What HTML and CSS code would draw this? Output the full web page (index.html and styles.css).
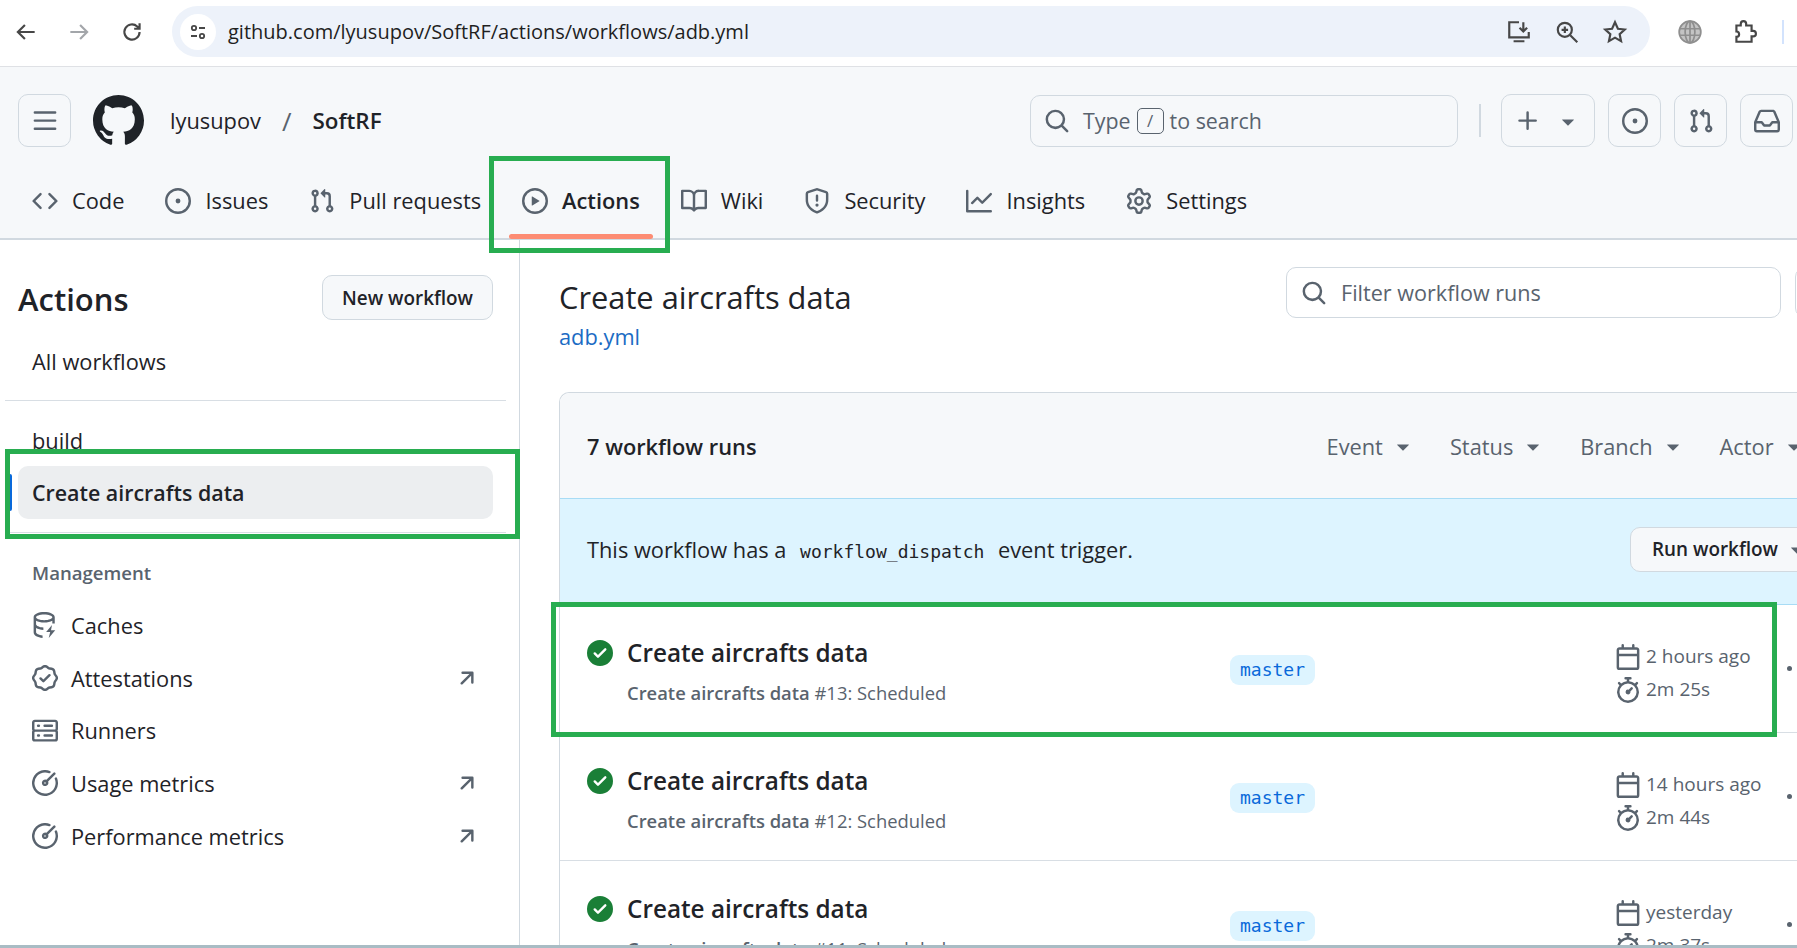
FILE: index.html
```html
<!DOCTYPE html>
<html lang="en">
<head>
  <meta charset="UTF-8">
  <meta name="viewport" content="width=device-width, initial-scale=1.0">
  <title>Create aircrafts data · lyusupov/SoftRF</title>
  <link rel="stylesheet" href="styles.css">
</head>
<body>

  <svg class="sprite" aria-hidden="true">
    <symbol id="i-bars" viewBox="0 0 16 16"><path d="M1 2.75A.75.75 0 0 1 1.75 2h12.5a.75.75 0 0 1 0 1.5H1.75A.75.75 0 0 1 1 2.75Zm0 5A.75.75 0 0 1 1.75 7h12.5a.75.75 0 0 1 0 1.5H1.75A.75.75 0 0 1 1 7.75ZM1.75 12h12.5a.75.75 0 0 1 0 1.5H1.75a.75.75 0 0 1 0-1.5Z"/></symbol>
    <symbol id="i-mark" viewBox="0 0 16 16"><path d="M8 0c4.42 0 8 3.58 8 8a8.013 8.013 0 0 1-5.45 7.59c-.4.08-.55-.17-.55-.38 0-.27.01-1.13.01-2.2 0-.75-.25-1.23-.54-1.48 1.78-.2 3.65-.88 3.65-3.95 0-.88-.31-1.59-.82-2.15.08-.2.36-1.02-.08-2.12 0 0-.67-.22-2.2.82-.64-.18-1.32-.27-2-.27-.68 0-1.36.09-2 .27-1.53-1.03-2.2-.82-2.2-.82-.44 1.1-.16 1.92-.08 2.12-.51.56-.82 1.28-.82 2.15 0 3.06 1.86 3.75 3.64 3.95-.23.2-.44.55-.51 1.07-.46.21-1.61.55-2.33-.66-.15-.24-.6-.83-1.23-.82-.67.01-.27.38.01.53.34.19.73.9.82 1.13.16.45.68 1.31 2.69.94 0 .67.01 1.3.01 1.49 0 .21-.15.45-.55.38A7.995 7.995 0 0 1 0 8c0-4.42 3.58-8 8-8Z"/></symbol>
    <symbol id="i-code" viewBox="0 0 16 16"><path d="m11.28 3.22 4.25 4.25a.75.75 0 0 1 0 1.06l-4.25 4.25a.749.749 0 0 1-1.275-.326.749.749 0 0 1 .215-.734L13.94 8l-3.72-3.72a.749.749 0 0 1 .326-1.275.749.749 0 0 1 .734.215Zm-6.56 0a.751.751 0 0 1 1.042.018.751.751 0 0 1 .018 1.042L2.06 8l3.72 3.72a.749.749 0 0 1-.326 1.275.749.749 0 0 1-.734-.215L.47 8.53a.75.75 0 0 1 0-1.06Z"/></symbol>
    <symbol id="i-issue" viewBox="0 0 16 16"><path d="M8 9.5a1.5 1.5 0 1 0 0-3 1.5 1.5 0 0 0 0 3Z"/><path d="M8 0a8 8 0 1 1 0 16A8 8 0 0 1 8 0ZM1.5 8a6.5 6.5 0 1 0 13 0 6.5 6.5 0 0 0-13 0Z"/></symbol>
    <symbol id="i-pull" viewBox="0 0 16 16"><path d="M1.5 3.25a2.25 2.25 0 1 1 3 2.122v5.256a2.251 2.251 0 1 1-1.5 0V5.372A2.25 2.25 0 0 1 1.5 3.25Zm5.677-.177L9.573.677A.25.25 0 0 1 10 .854V2.5h1A2.5 2.5 0 0 1 13.5 5v5.628a2.251 2.251 0 1 1-1.5 0V5a1 1 0 0 0-1-1h-1v1.646a.25.25 0 0 1-.427.177L7.177 3.427a.25.25 0 0 1 0-.354ZM3.75 2.5a.75.75 0 1 0 0 1.5.75.75 0 0 0 0-1.5Zm0 9.5a.75.75 0 1 0 0 1.5.75.75 0 0 0 0-1.5Zm8.25.75a.75.75 0 1 0 1.5 0 .75.75 0 0 0-1.5 0Z"/></symbol>
    <symbol id="i-play" viewBox="0 0 16 16"><path d="M8 0a8 8 0 1 1 0 16A8 8 0 0 1 8 0ZM1.5 8a6.5 6.5 0 1 0 13 0 6.5 6.5 0 0 0-13 0Zm4.879-2.773 4.264 2.559a.25.25 0 0 1 0 .428l-4.264 2.559A.25.25 0 0 1 6 10.559V5.442a.25.25 0 0 1 .379-.215Z"/></symbol>
    <symbol id="i-book" viewBox="0 0 16 16"><path d="M0 1.75A.75.75 0 0 1 .75 1h4.253c1.227 0 2.317.59 3 1.501A3.743 3.743 0 0 1 11.006 1h4.245a.75.75 0 0 1 .75.75v10.5a.75.75 0 0 1-.75.75h-4.507a2.25 2.25 0 0 0-1.591.659l-.622.621a.75.75 0 0 1-1.06 0l-.622-.621A2.25 2.25 0 0 0 5.258 13H.75a.75.75 0 0 1-.75-.75Zm7.251 10.324.004-5.073-.002-2.253A2.25 2.25 0 0 0 5.003 2.5H1.5v9h3.757a3.75 3.75 0 0 1 1.994.574ZM8.755 4.75l-.004 7.322a3.752 3.752 0 0 1 1.992-.572H14.5v-9h-3.495a2.25 2.25 0 0 0-2.25 2.25Z"/></symbol>
    <symbol id="i-shield" viewBox="0 0 16 16"><path d="M7.467.133a1.748 1.748 0 0 1 1.066 0l5.25 1.68A1.75 1.75 0 0 1 15 3.48V7c0 1.566-.32 3.182-1.303 4.682-.983 1.498-2.585 2.813-5.032 3.855a1.697 1.697 0 0 1-1.33 0c-2.447-1.042-4.049-2.357-5.032-3.855C1.32 10.182 1 8.566 1 7V3.48a1.75 1.75 0 0 1 1.217-1.667Zm.61 1.429a.25.25 0 0 0-.153 0l-5.25 1.68a.25.25 0 0 0-.174.238V7c0 1.358.275 2.666 1.057 3.86.784 1.194 2.121 2.34 4.366 3.297a.196.196 0 0 0 .154 0c2.245-.956 3.582-2.104 4.366-3.298C13.225 9.666 13.5 8.36 13.5 7V3.48a.251.251 0 0 0-.174-.237l-5.25-1.68ZM8.75 4.75v3a.75.75 0 0 1-1.5 0v-3a.75.75 0 0 1 1.5 0ZM9 10.5a1 1 0 1 1-2 0 1 1 0 0 1 2 0Z"/></symbol>
    <symbol id="i-graph" viewBox="0 0 16 16"><path d="M1.5 1.75V13.5h13.75a.75.75 0 0 1 0 1.5H.75a.75.75 0 0 1-.75-.75V1.75a.75.75 0 0 1 1.5 0Zm14.28 2.53-5.25 5.25a.75.75 0 0 1-1.06 0L7 7.06 4.28 9.78a.751.751 0 0 1-1.042-.018.751.751 0 0 1-.018-1.042l3.25-3.25a.75.75 0 0 1 1.06 0L10 7.94l4.72-4.72a.751.751 0 0 1 1.042.018.751.751 0 0 1 .018 1.042Z"/></symbol>
    <symbol id="i-gear" viewBox="0 0 16 16"><path d="M8 0a8.2 8.2 0 0 1 .701.031C9.444.095 9.99.645 10.16 1.29l.288 1.107c.018.066.079.158.212.224.231.114.454.243.668.386.123.082.233.09.299.071l1.103-.303c.644-.176 1.392.021 1.82.63.27.385.506.792.704 1.218.315.675.111 1.422-.364 1.891l-.814.806c-.049.048-.098.147-.088.294.016.257.016.515 0 .772-.01.147.038.246.088.294l.814.806c.475.469.679 1.216.364 1.891a7.977 7.977 0 0 1-.704 1.217c-.428.61-1.176.807-1.82.63l-1.102-.302c-.067-.019-.177-.011-.3.071a5.909 5.909 0 0 1-.668.386c-.133.066-.194.158-.211.224l-.29 1.106c-.168.646-.715 1.196-1.458 1.26a8.006 8.006 0 0 1-1.402 0c-.743-.064-1.289-.614-1.458-1.26l-.289-1.106c-.018-.066-.079-.158-.212-.224a5.738 5.738 0 0 1-.668-.386c-.123-.082-.233-.09-.299-.071l-1.103.303c-.644.176-1.392-.021-1.82-.63a8.12 8.12 0 0 1-.704-1.218c-.315-.675-.111-1.422.363-1.891l.815-.806c.05-.048.098-.147.088-.294a6.214 6.214 0 0 1 0-.772c.01-.147-.038-.246-.088-.294l-.815-.806C.635 6.045.431 5.298.746 4.623a7.92 7.92 0 0 1 .704-1.217c.428-.61 1.176-.807 1.82-.63l1.102.302c.067.019.177.011.3-.071.214-.143.437-.272.668-.386.133-.066.194-.158.211-.224l.29-1.106C6.009.645 6.556.095 7.299.03 7.53.01 7.764 0 8 0Zm-.571 1.525c-.036.003-.108.036-.137.146l-.289 1.105c-.147.561-.549.967-.998 1.189-.173.086-.34.183-.5.29-.417.278-.97.423-1.529.27l-1.103-.303c-.109-.03-.175.016-.195.045-.22.312-.412.644-.573.99-.014.031-.021.11.059.19l.815.806c.411.406.562.957.53 1.456a4.709 4.709 0 0 0 0 .582c.032.499-.119 1.05-.53 1.456l-.815.806c-.081.08-.073.159-.059.19.162.346.353.677.573.989.02.03.085.076.195.046l1.102-.303c.56-.153 1.113-.008 1.53.27.161.107.328.204.501.29.447.222.85.629.997 1.189l.289 1.105c.029.109.101.143.137.146a6.6 6.6 0 0 0 1.142 0c.036-.003.108-.036.137-.146l.289-1.105c.147-.561.549-.967.998-1.189.173-.086.34-.183.5-.29.417-.278.97-.423 1.529-.27l1.103.303c.109.029.175-.016.195-.045.22-.313.411-.644.573-.99.014-.031.021-.11-.059-.19l-.815-.806c-.411-.406-.562-.957-.53-1.456a4.709 4.709 0 0 0 0-.582c-.032-.499.119-1.05.53-1.456l.815-.806c.081-.08.073-.159.059-.19a6.464 6.464 0 0 0-.573-.989c-.02-.03-.085-.076-.195-.046l-1.102.303c-.56.153-1.113.008-1.53-.27a4.44 4.44 0 0 0-.501-.29c-.447-.222-.85-.629-.997-1.189l-.289-1.105c-.029-.11-.101-.143-.137-.146a6.6 6.6 0 0 0-1.142 0ZM11 8a3 3 0 1 1-6 0 3 3 0 0 1 6 0ZM9.5 8a1.5 1.5 0 1 0-3.001.001A1.5 1.5 0 0 0 9.5 8Z"/></symbol>
    <symbol id="i-search" viewBox="0 0 16 16"><path d="M10.68 11.74a6 6 0 0 1-7.922-8.982 6 6 0 0 1 8.982 7.922l3.04 3.04a.749.749 0 0 1-.326 1.275.749.749 0 0 1-.734-.215ZM11.5 7a4.499 4.499 0 1 0-8.997 0A4.499 4.499 0 0 0 11.5 7Z"/></symbol>
    <symbol id="i-plus" viewBox="0 0 16 16"><path d="M7.75 2a.75.75 0 0 1 .75.75V7h4.25a.75.75 0 0 1 0 1.5H8.5v4.25a.75.75 0 0 1-1.5 0V8.5H2.75a.75.75 0 0 1 0-1.5H7V2.75A.75.75 0 0 1 7.75 2Z"/></symbol>
    <symbol id="i-caret" viewBox="0 0 16 16"><path d="m4.427 7.427 3.396 3.396a.25.25 0 0 0 .354 0l3.396-3.396A.25.25 0 0 0 11.396 7H4.604a.25.25 0 0 0-.177.427Z"/></symbol>
    <symbol id="i-inbox" viewBox="0 0 16 16"><path d="M2.8 2.06A1.75 1.75 0 0 1 4.41 1h7.18c.7 0 1.333.417 1.61 1.06l2.74 6.395c.04.093.06.194.06.295v4.5A1.75 1.75 0 0 1 14.25 15H1.75A1.75 1.75 0 0 1 0 13.25v-4.5c0-.101.02-.202.06-.295Zm1.61.44a.25.25 0 0 0-.23.152L1.887 8H4.75a.75.75 0 0 1 .6.3L6.625 10h2.75l1.275-1.7a.75.75 0 0 1 .6-.3h2.863L11.82 2.652a.25.25 0 0 0-.23-.152Zm10.09 7h-2.875l-1.275 1.7a.75.75 0 0 1-.6.3h-3.5a.75.75 0 0 1-.6-.3L4.375 9.5H1.5v3.75c0 .138.112.25.25.25h12.5a.25.25 0 0 0 .25-.25Z"/></symbol>
    <symbol id="i-check" viewBox="0 0 16 16"><path d="M8 16A8 8 0 1 1 8 0a8 8 0 0 1 0 16Zm3.78-9.72a.751.751 0 0 0-.018-1.042.751.751 0 0 0-1.042-.018L6.75 9.19 5.28 7.72a.751.751 0 0 0-1.042.018.751.751 0 0 0-.018 1.042l2 2a.75.75 0 0 0 1.06 0Z"/></symbol>
    <symbol id="i-calendar" viewBox="0 0 16 16"><path d="M4.75 0a.75.75 0 0 1 .75.75V2h5V.75a.75.75 0 0 1 1.5 0V2h1.25c.966 0 1.75.784 1.75 1.75v10.5A1.75 1.75 0 0 1 13.25 16H2.75A1.75 1.75 0 0 1 1 14.25V3.75C1 2.784 1.784 2 2.75 2H4V.75A.75.75 0 0 1 4.75 0ZM2.5 7.5v6.75c0 .138.112.25.25.25h10.5a.25.25 0 0 0 .25-.25V7.5Zm10.75-4H2.75a.25.25 0 0 0-.25.25V6h11V3.75a.25.25 0 0 0-.25-.25Z"/></symbol>
    <symbol id="i-watch" viewBox="0 0 16 16"><path d="M5.75.75A.75.75 0 0 1 6.5 0h3a.75.75 0 0 1 0 1.5h-.75v1l-.001.041a6.724 6.724 0 0 1 3.464 1.435l.007-.006.75-.75a.751.751 0 0 1 1.042.018.751.751 0 0 1 .018 1.042l-.75.75-.006.007a6.75 6.75 0 1 1-10.548 0L2.72 5.03l-.75-.75a.751.751 0 0 1 .018-1.042.751.751 0 0 1 1.042-.018l.75.75.007.006A6.72 6.72 0 0 1 7.25 2.541V1.5H6.5a.75.75 0 0 1-.75-.75ZM8 14.5a5.25 5.25 0 1 0-.001-10.501A5.25 5.25 0 0 0 8 14.5Zm.389-6.7 1.33-1.33a.75.75 0 1 1 1.061 1.06L9.45 8.861A1.503 1.503 0 0 1 8 10.75a1.499 1.499 0 1 1 .389-2.95Z"/></symbol>
    <symbol id="i-arrow" viewBox="0 0 16 16"><path d="M4.53 4.75A.75.75 0 0 1 5.28 4h6.01a.75.75 0 0 1 .75.75v6.01a.75.75 0 0 1-1.5 0v-4.2l-5.26 5.261a.749.749 0 0 1-1.275-.326.749.749 0 0 1 .215-.734L9.48 5.5h-4.2a.75.75 0 0 1-.75-.75Z"/></symbol>
    <symbol id="i-verified" viewBox="0 0 16 16"><path d="m9.585.52.929.68c.153.112.331.186.518.215l1.138.175a2.678 2.678 0 0 1 2.24 2.24l.174 1.139c.029.187.103.365.215.518l.68.928a2.677 2.677 0 0 1 0 3.17l-.68.928a1.174 1.174 0 0 0-.215.518l-.175 1.138a2.678 2.678 0 0 1-2.241 2.241l-1.138.175a1.17 1.17 0 0 0-.518.215l-.928.68a2.677 2.677 0 0 1-3.17 0l-.928-.68a1.174 1.174 0 0 0-.518-.215L3.83 14.41a2.678 2.678 0 0 1-2.24-2.24l-.175-1.138a1.17 1.17 0 0 0-.215-.518l-.68-.928a2.677 2.677 0 0 1 0-3.17l.68-.928c.112-.153.186-.331.215-.518l.175-1.14a2.678 2.678 0 0 1 2.24-2.24l1.139-.175c.187-.029.365-.103.518-.215l.928-.68a2.677 2.677 0 0 1 3.17 0ZM7.303 1.728l-.927.68a2.67 2.67 0 0 1-1.18.489l-1.137.174a1.179 1.179 0 0 0-.987.987l-.174 1.136a2.677 2.677 0 0 1-.489 1.18l-.68.928a1.18 1.18 0 0 0 0 1.394l.68.927c.256.348.424.753.489 1.18l.174 1.137c.078.509.478.909.987.987l1.136.174a2.67 2.67 0 0 1 1.18.489l.928.68c.414.305.979.305 1.394 0l.927-.68a2.67 2.67 0 0 1 1.18-.489l1.137-.174a1.18 1.18 0 0 0 .987-.987l.174-1.136a2.67 2.67 0 0 1 .489-1.18l.68-.928a1.176 1.176 0 0 0 0-1.394l-.68-.927a2.686 2.686 0 0 1-.489-1.18l-.174-1.137a1.179 1.179 0 0 0-.987-.987l-1.136-.174a2.677 2.677 0 0 1-1.18-.489l-.928-.68a1.176 1.176 0 0 0-1.394 0ZM11.28 6.78l-3.75 3.75a.75.75 0 0 1-1.06 0L4.72 8.78a.751.751 0 0 1 .018-1.042.751.751 0 0 1 1.042-.018l1.22 1.22 3.22-3.22a.751.751 0 0 1 1.042.018.751.751 0 0 1 .018 1.042Z"/></symbol>
    <symbol id="i-server" viewBox="0 0 16 16"><path d="M1.75 1h12.5c.966 0 1.75.784 1.75 1.75v4c0 .372-.116.717-.314 1 .198.283.314.628.314 1v4a1.75 1.75 0 0 1-1.75 1.75H1.75A1.75 1.75 0 0 1 0 12.75v-4c0-.372.116-.717.314-1A1.739 1.739 0 0 1 0 6.75v-4C0 1.784.784 1 1.75 1ZM1.5 2.75v4c0 .138.112.25.25.25h12.5a.25.25 0 0 0 .25-.25v-4a.25.25 0 0 0-.25-.25H1.75a.25.25 0 0 0-.25.25Zm.25 5.75a.25.25 0 0 0-.25.25v4c0 .138.112.25.25.25h12.5a.25.25 0 0 0 .25-.25v-4a.25.25 0 0 0-.25-.25ZM7 4.75A.75.75 0 0 1 7.75 4h4.5a.75.75 0 0 1 0 1.5h-4.5A.75.75 0 0 1 7 4.75ZM7.75 10h4.5a.75.75 0 0 1 0 1.5h-4.5a.75.75 0 0 1 0-1.5ZM3 4.75A.75.75 0 0 1 3.75 4h.5a.75.75 0 0 1 0 1.5h-.5A.75.75 0 0 1 3 4.75ZM3.75 10h.5a.75.75 0 0 1 0 1.5h-.5a.75.75 0 0 1 0-1.5Z"/></symbol>
    <symbol id="i-meter" viewBox="0 0 16 16"><path d="M8 1.5a6.5 6.5 0 1 0 6.016 4.035.75.75 0 0 1 1.388-.57A8 8 0 1 1 11.035.596a.75.75 0 1 1-.57 1.388A6.47 6.47 0 0 0 8 1.5Zm6.28.22a.75.75 0 0 1 0 1.06L9.93 7.13A2 2 0 1 1 8.87 6.07l4.35-4.35a.75.75 0 0 1 1.06 0ZM8 7.5a.5.5 0 1 0 0 1 .5.5 0 0 0 0-1Z"/></symbol>
    <symbol id="i-cache" viewBox="0 0 16 16"><path d="M7.5 0C11 0 14 1.2 14 3.2V7h-1.5V5.4C11.300 6.100 9.500 6.500 7.500 6.500S3.700 6.100 2.500 5.400v2.100c0 .9 2 1.900 4.500 2V11c-1.800-.1-3.400-.5-4.500-1.200v2.700c0 .8 1.700 1.700 4 1.900V16C3.500 15.800 1 14.500 1 12.500V3.200C1 1.200 4 0 7.500 0Zm0 1.500c-2.900 0-5 .9-5 1.700s2.100 1.800 5 1.800 5-1 5-1.800-2.100-1.700-5-1.700Z"/><path d="M12.300 8 8.700 12.300h2.500L10.300 16l4-4.800h-2.600Z"/></symbol>
  </svg>

  <div class="chrome">
    <svg class="chrome-icon" viewBox="0 0 24 24"><path d="M20 12H5M11 5.500 4.500 12l6.500 6.500"/></svg>
    <svg class="chrome-icon is-off" viewBox="0 0 24 24"><path d="M4 12h15M13 5.500l6.500 6.500-6.500 6.500"/></svg>
    <svg class="chrome-icon" viewBox="0 0 24 24"><path d="M19 12a7 7 0 1 1-2.200-5.100L19 9M19 4v5h-5"/></svg>
    <div class="omnibox">
      <span class="tune">
        <svg viewBox="0 0 20 20"><circle cx="6" cy="6" r="2.200"/><path d="M11 6h6M3 14h6"/><circle cx="14" cy="14" r="2.200"/></svg>
      </span>
      <span class="url">github.com/lyusupov/SoftRF/actions/workflows/adb.yml</span>
      <span class="omni-actions">
        <svg class="chrome-icon" viewBox="0 0 24 24"><path d="M12 3H3v14h18V12M16 3v8M12.500 8l3.500 3.500L19.500 8M7 20.500h10"/></svg>
        <svg class="chrome-icon" viewBox="0 0 24 24"><circle cx="10" cy="10" r="6.500"/><path d="m15 15 6.500 6.500M7 10h6M10 7v6"/></svg>
        <svg class="chrome-icon" viewBox="0 0 24 24"><path d="m12 3 2.700 6 6.300.700-4.700 4.300 1.300 6.500-5.600-3.300-5.600 3.300 1.300-6.500L3 9.700 9.300 9Z"/></svg>
      </span>
    </div>
    <svg class="chrome-icon globe" viewBox="0 0 24 24"><circle cx="12" cy="12" r="10"/><ellipse cx="12" cy="12" rx="4.500" ry="10"/><path d="M2 9h20M2 15h20M12 2v20"/></svg>
    <svg class="chrome-icon" viewBox="0 0 24 24"><path d="M5 6h4V4.500a2.500 2.500 0 0 1 5 0V6h5v5h1.500a2.500 2.500 0 0 1 0 5H19v5H5v-4.500a2.500 2.500 0 0 0 0-5Z"/></svg>
    <span class="chrome-sep"></span>
  </div>

  <header class="repo-header">
    <div class="top-row">
      <button class="icon-btn"><svg class="oct"><use href="#i-bars"/></svg></button>
      <svg class="logo"><use href="#i-mark"/></svg>
      <span class="crumb">lyusupov</span>
      <span class="crumb-sep">/</span>
      <strong class="crumb-repo">SoftRF</strong>
      <div class="top-search">
        <svg class="oct"><use href="#i-search"/></svg>
        <span>Type</span>
        <kbd class="slash">/</kbd>
        <span>to search</span>
      </div>
      <span class="top-divider"></span>
      <button class="icon-btn plus-btn">
        <svg class="oct"><use href="#i-plus"/></svg>
        <svg class="caret"><use href="#i-caret"/></svg>
      </button>
      <button class="icon-btn"><svg class="oct"><use href="#i-issue"/></svg></button>
      <button class="icon-btn"><svg class="oct"><use href="#i-pull"/></svg></button>
      <button class="icon-btn"><svg class="oct"><use href="#i-inbox"/></svg></button>
    </div>
    <nav class="tabs">
      <a class="tab"><svg class="oct"><use href="#i-code"/></svg>Code</a>
      <a class="tab"><svg class="oct"><use href="#i-issue"/></svg>Issues</a>
      <a class="tab"><svg class="oct"><use href="#i-pull"/></svg>Pull requests</a>
      <a class="tab tab-active"><svg class="oct"><use href="#i-play"/></svg>Actions</a>
      <a class="tab"><svg class="oct"><use href="#i-book"/></svg>Wiki</a>
      <a class="tab"><svg class="oct"><use href="#i-shield"/></svg>Security</a>
      <a class="tab"><svg class="oct"><use href="#i-graph"/></svg>Insights</a>
      <a class="tab"><svg class="oct"><use href="#i-gear"/></svg>Settings</a>
    </nav>
  </header>

  <div class="layout">
    <aside class="sidebar">
      <div class="side-head">
        <h1>Actions</h1>
        <button class="btn">New workflow</button>
      </div>
      <a class="side-item">All workflows</a>
      <hr class="side-rule rule-top">
      <a class="side-item">build</a>
      <a class="side-item side-current">Create aircrafts data</a>
      <hr class="side-rule rule-bottom">
      <div class="side-title">Management</div>
      <a class="side-item"><svg class="oct"><use href="#i-cache"/></svg>Caches</a>
      <a class="side-item"><svg class="oct"><use href="#i-verified"/></svg>Attestations<svg class="oct side-arrow"><use href="#i-arrow"/></svg></a>
      <a class="side-item"><svg class="oct"><use href="#i-server"/></svg>Runners</a>
      <a class="side-item"><svg class="oct"><use href="#i-meter"/></svg>Usage metrics<svg class="oct side-arrow"><use href="#i-arrow"/></svg></a>
      <a class="side-item"><svg class="oct"><use href="#i-meter"/></svg>Performance metrics<svg class="oct side-arrow"><use href="#i-arrow"/></svg></a>
    </aside>

    <main class="content">
      <div class="content-head">
        <div class="content-title">
          <h2>Create aircrafts data</h2>
          <a class="file-link">adb.yml</a>
        </div>
        <div class="filter">
          <svg class="oct"><use href="#i-search"/></svg>
          Filter workflow runs
        </div>
        <div class="filter-next"></div>
      </div>

      <section class="runs">
        <div class="runs-head">
          <strong>7 workflow runs</strong>
          <div class="runs-filters">
            <span>Event<svg class="caret"><use href="#i-caret"/></svg></span>
            <span>Status<svg class="caret"><use href="#i-caret"/></svg></span>
            <span>Branch<svg class="caret"><use href="#i-caret"/></svg></span>
            <span>Actor<svg class="caret"><use href="#i-caret"/></svg></span>
          </div>
        </div>
        <div class="dispatch">
          <span>This workflow has a <code>workflow_dispatch</code> event trigger.</span>
          <button class="btn run-btn">Run workflow<svg class="caret"><use href="#i-caret"/></svg></button>
        </div>

        <article class="run">
          <svg class="run-check"><use href="#i-check"/></svg>
          <div class="run-main">
            <div class="run-title">Create aircrafts data</div>
            <div class="run-sub"><b>Create aircrafts data</b> #13: Scheduled</div>
          </div>
          <span class="branch">master</span>
          <div class="run-meta">
            <div><svg class="oct"><use href="#i-calendar"/></svg>2 hours ago</div>
            <div><svg class="oct"><use href="#i-watch"/></svg>2m 25s</div>
          </div>
          <span class="run-dot"></span>
        </article>

        <article class="run">
          <svg class="run-check"><use href="#i-check"/></svg>
          <div class="run-main">
            <div class="run-title">Create aircrafts data</div>
            <div class="run-sub"><b>Create aircrafts data</b> #12: Scheduled</div>
          </div>
          <span class="branch">master</span>
          <div class="run-meta">
            <div><svg class="oct"><use href="#i-calendar"/></svg>14 hours ago</div>
            <div><svg class="oct"><use href="#i-watch"/></svg>2m 44s</div>
          </div>
          <span class="run-dot"></span>
        </article>

        <article class="run">
          <svg class="run-check"><use href="#i-check"/></svg>
          <div class="run-main">
            <div class="run-title">Create aircrafts data</div>
            <div class="run-sub"><b>Create aircrafts data</b> #11: Scheduled</div>
          </div>
          <span class="branch">master</span>
          <div class="run-meta">
            <div><svg class="oct"><use href="#i-calendar"/></svg>yesterday</div>
            <div><svg class="oct"><use href="#i-watch"/></svg>2m 37s</div>
          </div>
          <span class="run-dot"></span>
        </article>
      </section>
    </main>
  </div>

  <div class="window-edge"></div>

  <!-- green boxes drawn on top of the screenshot -->
  <div class="mark mark-tab"></div>
  <div class="mark mark-side"></div>
  <div class="mark mark-run"></div>

</body>
</html>
```

FILE: styles.css
```css
* {
  box-sizing: border-box;
}
html, body {
  margin: 0;
  height: 948px;
  overflow: hidden;
}
body {
  position: relative;
  display: flex;
  flex-direction: column;
  font-family: "Open Sans", "Noto Sans", sans-serif;
  font-size: 21.8px;
  color: #1f2328;
  background-color: white;
}
h1, h2 {
  margin: 0;
}
button {
  font-family: inherit;
  color: inherit;
}
.sprite {
  display: none;
}
.oct {
  width: 26px;
  height: 26px;
  flex: none;
  fill: #59636e;
}
.caret {
  width: 26px;
  height: 26px;
  flex: none;
  fill: #59636e;
}

/* browser bar */
.chrome {
  flex: none;
  height: 67px;
  display: flex;
  align-items: center;
  padding: 0 0 3px 13px;
  border-bottom: 1px solid #dfe1e5;
}
.chrome-icon {
  width: 26px;
  height: 26px;
  flex: none;
  fill: none;
  stroke: #474747;
  stroke-width: 2;
  margin-right: 27px;
}
.chrome-icon.is-off {
  stroke: #a3a6aa;
}
.omnibox {
  width: 1478px;
  height: 51px;
  display: flex;
  align-items: center;
  padding: 0 22px 0 8px;
  border-radius: 26px;
  background-color: #edf2fa;
}
.tune {
  width: 36px;
  height: 36px;
  display: flex;
  align-items: center;
  justify-content: center;
  border-radius: 50%;
  background-color: white;
}
.tune svg {
  width: 20px;
  height: 20px;
  fill: none;
  stroke: #474747;
  stroke-width: 1.8;
}
.url {
  margin-left: 12px;
  font-size: 20px;
  color: #1f1f1f;
}
.omni-actions {
  margin-left: auto;
  display: flex;
  gap: 22px;
}
.omni-actions .chrome-icon {
  margin: 0;
}
.globe {
  margin: 0 28px 0 27px;
  fill: #c4c4c4;
  stroke: #8f8f8f;
  stroke-width: 1.6;
}
.chrome-sep {
  width: 2px;
  height: 24px;
  margin-left: -2px;
  background-color: #d3e3fd;
}

/* repo header */
.repo-header {
  flex: none;
  height: 173px;
  padding-top: 27px;
  background-color: #f6f8fa;
  border-bottom: 2px solid #d1d9e0;
}
.top-row {
  display: flex;
  align-items: center;
  height: 53px;
  padding: 0 4px 0 18px;
}
.icon-btn {
  width: 53px;
  height: 53px;
  flex: none;
  display: flex;
  align-items: center;
  justify-content: center;
  padding: 0;
  margin-left: 13px;
  border: 1px solid #d1d9e0;
  border-radius: 10px;
  background-color: #f6f8fa;
}
.top-row > .icon-btn:first-child {
  margin-left: 0;
}
.plus-btn {
  width: 94px;
  gap: 14px;
  margin-left: 20px;
}
.logo {
  width: 51px;
  height: 51px;
  margin-left: 22px;
  fill: #1f2328;
}
.crumb {
  margin-left: 26px;
}
.crumb-sep {
  margin: 0 21px;
  color: #59636e;
  font-size: 26px;
}
.crumb-repo {
  font-size: 22.4px;
  font-weight: 600;
}
.top-search {
  width: 428px;
  height: 52px;
  margin-left: auto;
  margin-right: 21px;
  display: flex;
  align-items: center;
  gap: 6px;
  padding-left: 13px;
  border: 1px solid #d1d9e0;
  border-radius: 10px;
  font-size: 21.4px;
  color: #59636e;
}
.top-search .oct {
  margin-right: 7px;
}
.slash {
  width: 27px;
  height: 26px;
  display: flex;
  align-items: center;
  justify-content: center;
  border: 1px solid #59636e;
  border-radius: 5px;
  font-family: "Open Sans", sans-serif;
  font-size: 17px;
}
.top-divider {
  width: 2px;
  height: 33px;
  background-color: #d1d9e0;
}
.tabs {
  display: flex;
  gap: 15px;
  height: 66px;
  margin-top: 27px;
  padding-left: 19px;
}
.tab {
  position: relative;
  display: flex;
  align-items: center;
  gap: 14px;
  height: 53px;
  padding: 0 13px;
}
.tab-active {
  font-weight: 600;
}
.tab-active::after {
  content: "";
  position: absolute;
  left: 0;
  right: 0;
  bottom: -12px;
  height: 5px;
  border-radius: 3px;
  background-color: #fd8c73;
}

/* page body */
.layout {
  flex: 1;
  min-height: 0;
  display: flex;
  overflow: hidden;
}
.sidebar {
  flex: none;
  width: 520px;
  padding: 34px 26px 0 18px;
  border-right: 1px solid #d1d9e0;
}
.side-head {
  display: flex;
  align-items: center;
  justify-content: space-between;
  margin-bottom: 14px;
}
.side-head h1 {
  font-size: 31px;
  font-weight: 600;
  line-height: 44px;
  margin-top: 3px;
}
.btn {
  height: 45px;
  padding: 0 19px;
  font-size: 18.9px;
  font-weight: 600;
  border: 1px solid #d1d9e0;
  border-radius: 10px;
  background-color: #f6f8fa;
}
.side-item {
  position: relative;
  display: flex;
  align-items: center;
  gap: 13px;
  height: 52.7px;
  padding: 0 13px 0 14px;
}
.side-current {
  font-size: 21.4px;
  font-weight: 600;
  border-radius: 10px;
  background-color: #eceef0;
}
.side-current::before {
  content: "";
  position: absolute;
  left: -10px;
  top: 8px;
  bottom: 8px;
  width: 4px;
  border-radius: 2px;
  background-color: #0969da;
}
.side-arrow {
  margin-left: auto;
}
.side-rule {
  height: 1px;
  margin: 0 -13px;
  border: none;
  background-color: #d8dee4;
}
.rule-top {
  margin-top: 12px;
  margin-bottom: 13px;
}
.rule-bottom {
  margin-top: 13px;
}
.side-title {
  padding: 27px 0 13px 14px;
  font-size: 18.6px;
  line-height: 26px;
  font-weight: 600;
  color: #59636e;
}

/* workflow runs */
.content {
  flex: none;
  width: 1335px;
  padding: 22px 0 0 39px;
}
.content-head {
  display: flex;
  align-items: flex-start;
  height: 130px;
}
.content-title {
  flex: 1;
}
.content-title h2 {
  font-size: 30.8px;
  font-weight: 400;
  line-height: 50px;
  margin-top: 10px;
}
.file-link {
  display: block;
  line-height: 30px;
  color: #1c6cc4;
}
.filter {
  width: 495px;
  height: 51px;
  margin-left: auto;
  margin-top: 5px;
  display: flex;
  align-items: center;
  gap: 14px;
  padding-left: 14px;
  border: 1px solid #d1d9e0;
  border-radius: 10px;
  font-size: 21.6px;
  color: #59636e;
}
.filter-next {
  width: 60px;
  height: 51px;
  margin: 5px 0 0 14px;
  border: 1px solid #d1d9e0;
  border-radius: 10px;
}
.runs {
  border: 1px solid #d1d9e0;
  border-bottom: none;
  border-right: none;
  border-radius: 10px 0 0 0;
}
.runs-head {
  height: 105px;
  display: flex;
  align-items: center;
  padding: 1px 0 0 27px;
  border-radius: 10px 0 0 0;
  background-color: #f6f8fa;
}
.runs-head strong {
  font-weight: 600;
  white-space: nowrap;
}
.runs-filters {
  display: flex;
  gap: 34px;
  margin-left: 570px;
  color: #59636e;
}
.runs-filters span {
  display: flex;
  align-items: center;
  gap: 7px;
}
.dispatch {
  height: 107px;
  display: flex;
  align-items: center;
  padding: 0 0 5px 27px;
  border-top: 1px solid #a8dcf5;
  border-bottom: 1px solid #a8dcf5;
  background-color: #ddf4ff;
}
.dispatch code {
  margin: 0 8px;
  font-family: "DejaVu Sans Mono", "Liberation Mono", monospace;
  font-size: 18px;
}
.run-btn {
  display: flex;
  align-items: center;
  gap: 6px;
  width: 200px;
  padding: 0 0 0 21px;
  margin: 0 25px 0 auto;
}
.run {
  height: 128px;
  display: grid;
  grid-template-columns: 40px 603px 385px 172px 6px;
  align-items: center;
  padding-left: 27px;
  border-bottom: 1px solid #d8dee4;
}
.run-check {
  width: 26px;
  height: 26px;
  margin-top: -32px;
  fill: #1a7f37;
}
.run-title {
  font-size: 24.3px;
  font-weight: 600;
  line-height: 40px;
}
.run-sub {
  font-size: 18.4px;
  line-height: 40px;
  color: #59636e;
}
.run-sub b {
  font-weight: 600;
}
.run-main {
  margin-top: 8px;
}
.branch {
  justify-self: start;
  height: 30px;
  margin-top: 2px;
  padding: 0 10px;
  border-radius: 9px;
  font-family: "DejaVu Sans Mono", "Liberation Mono", monospace;
  font-size: 18px;
  line-height: 30px;
  color: #0969da;
  background-color: #ddf4ff;
}
.run-meta {
  margin-top: 9px;
  font-size: 19px;
  line-height: 33px;
  color: #59636e;
}
.run-meta div {
  display: flex;
  align-items: center;
  gap: 5px;
  white-space: nowrap;
}
.run-dot {
  width: 5px;
  height: 5px;
  border-radius: 50%;
  background-color: #59636e;
}

/* bottom edge of the captured window */
.window-edge {
  flex: none;
  height: 3px;
  background-color: #a9bcc4;
}

/* annotation boxes */
.mark {
  position: absolute;
  border: 5px solid #28ad50;
  pointer-events: none;
}
.mark-tab {
  left: 489px;
  top: 156px;
  width: 181px;
  height: 97px;
}
.mark-side {
  left: 5px;
  top: 449px;
  width: 515px;
  height: 90px;
}
.mark-run {
  left: 551px;
  top: 602px;
  width: 1226px;
  height: 135px;
}
```
